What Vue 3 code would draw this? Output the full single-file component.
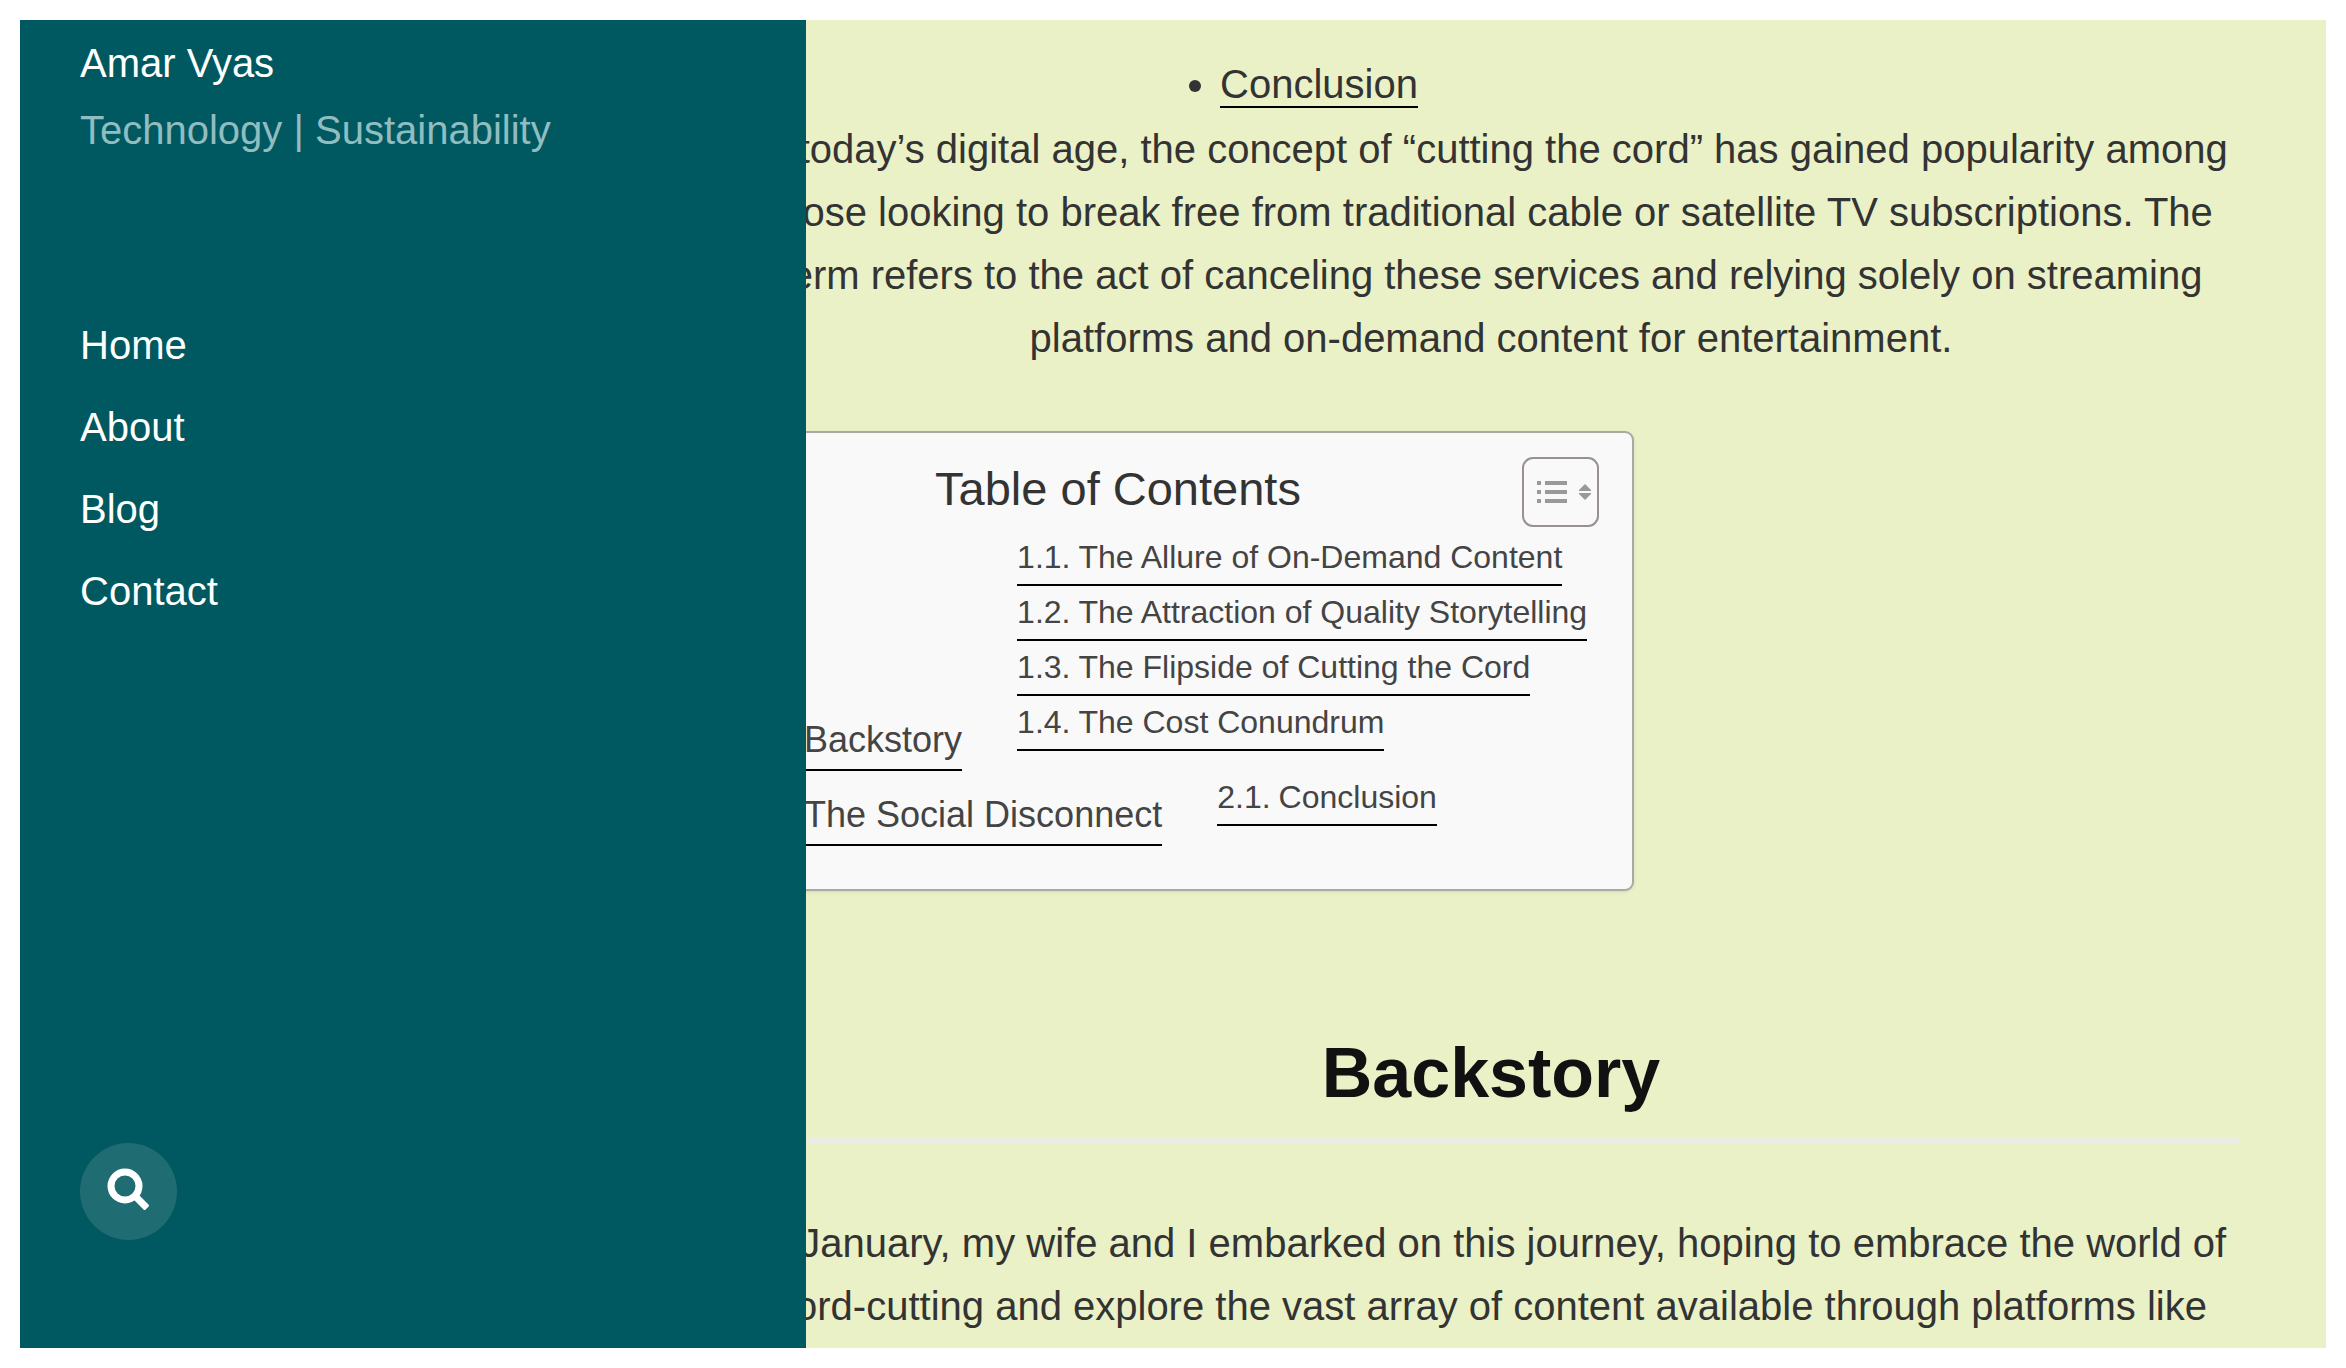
<template>
  <div class="site">
    <aside class="sidebar">
      <a class="site-title" href="#">Amar Vyas</a>
      <p class="tagline">Technology | Sustainability</p>
      <nav class="menu" aria-label="Main">
        <a v-for="item in menu" :key="item" href="#">{{ item }}</a>
      </nav>
      <button class="search-button" type="button" aria-label="Search">
        <svg viewBox="0 0 44 44" width="44" height="44" aria-hidden="true">
          <circle cx="18" cy="16" r="14" fill="none" stroke="currentColor" stroke-width="7" />
          <path
            d="M31.4 26.6 40.4 35.6 37.6 38.4 28.6 29.4z"
            fill="currentColor"
            stroke="currentColor"
            stroke-width="3"
            stroke-linejoin="round"
          />
        </svg>
      </button>
    </aside>

    <main class="content">
      <ul class="summary">
        <li><a href="#conclusion">Conclusion</a></li>
      </ul>
      <p>
        In today’s digital age, the concept of “cutting the cord” has gained popularity among
        those looking to break free from traditional cable or satellite TV subscriptions. The
        term refers to the act of canceling these services and relying solely on streaming
        platforms and on-demand content for entertainment.
      </p>

      <section class="toc">
        <div class="toc-header">
          <p class="toc-title">Table of Contents</p>
          <button
            class="toc-toggle"
            type="button"
            aria-label="Toggle table of contents"
            :aria-expanded="isOpen"
            @click="isOpen = !isOpen"
          >
            <svg viewBox="0 0 56 24" width="56" height="24" fill="#999" aria-hidden="true">
              <path d="M4 1h4v4H4zM12 1h22v4H12zM4 10h4v4H4zM12 10h22v4H12zM4 19h4v4H4zM12 19h22v4H12z" />
              <path d="M46 11v-1l6-6 6 6v1z" />
              <path d="M46 13v1l6 6 6-6v-1z" />
            </svg>
          </button>
        </div>
        <ol v-show="isOpen" class="toc-list">
          <li v-for="(entry, i) in toc" :key="entry.title" class="toc-row">
            <a class="toc-link" href="#"><span class="number">{{ i + 1 }}.</span>{{ entry.title }}</a>
            <ol class="toc-sublist">
              <li v-for="(child, j) in entry.children" :key="child">
                <a class="toc-sublink" href="#"><span class="number">{{ i + 1 }}.{{ j + 1 }}.</span>{{ child }}</a>
              </li>
            </ol>
          </li>
        </ol>
      </section>

      <h2 id="backstory">Backstory</h2>
      <hr>
      <p>
        In January, my wife and I embarked on this journey, hoping to embrace the world of
        cord-cutting and explore the vast array of content available through platforms like
      </p>
    </main>
  </div>
</template>

<script setup>
import { ref } from "vue";

const isOpen = ref(true);

const menu = ["Home", "About", "Blog", "Contact"];

const toc = [
  {
    title: "Backstory",
    children: [
      "The Allure of On-Demand Content",
      "The Attraction of Quality Storytelling",
      "The Flipside of Cutting the Cord",
      "The Cost Conundrum",
    ],
  },
  {
    title: "The Social Disconnect",
    children: ["Conclusion"],
  },
];
</script>

<style>
body {
  background-color: #fff;
}
</style>

<style scoped>
.site {
  display: flex;
  box-sizing: border-box;
  min-height: 100vh;
  border: 20px solid #fff;
  background-color: #eaf1c6;
  color: #333;
  font-family: "Liberation Sans", Arial, sans-serif;
  font-size: 40px;
  line-height: 63px;
}

p,
ul,
ol,
h2,
hr {
  margin: 0;
  padding: 0;
}

a {
  color: inherit;
  text-decoration: none;
}

.sidebar {
  position: relative;
  z-index: 1;
  display: flex;
  flex: none;
  flex-direction: column;
  align-items: flex-start;
  box-sizing: border-box;
  width: 786px;
  padding: 12px 60px 108px;
  background-color: #005960;
  color: #fff;
}

.tagline {
  margin-top: 4px;
  color: #91bdc0;
}

.menu {
  display: flex;
  flex-direction: column;
  gap: 19px;
  margin: 152px 0 40px;
}

.search-button {
  display: flex;
  align-items: center;
  justify-content: center;
  width: 97px;
  height: 97px;
  margin-top: auto;
  padding: 0;
  border: 0;
  border-radius: 50%;
  background-color: rgba(255, 255, 255, 0.12);
  color: #fff;
}

.search-button svg {
  overflow: visible;
}

/* the article slides partly under the sidebar */
.content {
  flex: 1;
  min-width: 0;
  margin-left: -64px;
  padding: 33px 86px 0 0;
  text-align: center;
}

.summary {
  margin-bottom: 2px;
  padding-left: 478px;
  text-align: left;
}

.summary a {
  border-bottom: 2px solid #000;
}

.toc {
  box-sizing: border-box;
  width: 892px;
  max-width: 100%;
  margin-top: 61px;
  padding: 24px 22px 43px;
  border: 2px solid #a9aaa2;
  border-radius: 9px;
  background-color: #f9f9f9;
  box-shadow: 0 1px 3px rgba(0, 0, 0, 0.1);
}

.toc-header {
  display: flex;
  align-items: flex-start;
  padding-right: 11px;
}

.toc-title {
  flex: 1;
  font-size: 47px;
}

.toc-toggle {
  display: flex;
  align-items: center;
  justify-content: center;
  box-sizing: border-box;
  width: 77px;
  height: 70px;
  margin-left: 52px;
  padding: 0;
  border: 2px solid #999191;
  border-radius: 11px;
  background: transparent;
}

.toc-toggle svg {
  overflow: visible;
}

.toc-list {
  margin-top: 4px;
  color: #444;
  text-align: left;
  list-style: none;
}

.toc-row {
  display: flex;
  align-items: flex-end;
  gap: 55px;
}

.toc-link,
.toc-sublink {
  display: block;
  width: fit-content;
  border-bottom: 2px solid #000;
  white-space: nowrap;
}

.toc-link {
  font-size: 36px;
  line-height: 59px;
}

.toc-sublist {
  margin-bottom: 20px;
  list-style: none;
}

.toc-sublink {
  font-size: 32px;
  line-height: 53px;
}

.number {
  margin-right: 8px;
}

h2 {
  margin-top: 142px;
  color: #111;
  font-size: 70px;
  line-height: 80px;
}

hr {
  height: 5px;
  margin: 25px 0 69px;
  border: 0;
  border-radius: 3px;
  background-color: #ecece4;
}
</style>
